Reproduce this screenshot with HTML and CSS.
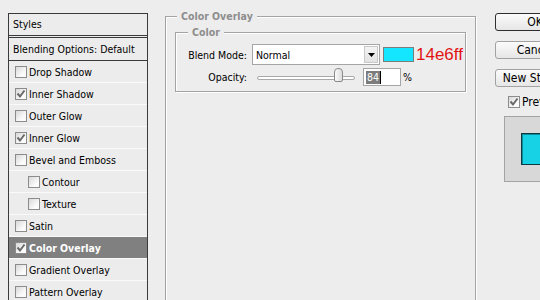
FILE: index.html
```html
<!DOCTYPE html>
<html>
<head>
<meta charset="utf-8">
<title>Layer Style</title>
<link rel="stylesheet" href="styles.css">
</head>
<body>
<div class="styles">
  <div class="hdr">Styles</div>
  <div class="blend">Blending Options: Default</div>
  <div class="row"><span class="cb"></span>Drop Shadow</div>
  <div class="row"><span class="cb"><svg viewBox="0 0 10 10"><path d="M1.5 4.5 L4 7.5 L8.5 1.5"/></svg></span>Inner Shadow</div>
  <div class="row"><span class="cb"></span>Outer Glow</div>
  <div class="row"><span class="cb"><svg viewBox="0 0 10 10"><path d="M1.5 4.5 L4 7.5 L8.5 1.5"/></svg></span>Inner Glow</div>
  <div class="row"><span class="cb"></span>Bevel and Emboss</div>
  <div class="row sub"><span class="cb"></span>Contour</div>
  <div class="row sub"><span class="cb"></span>Texture</div>
  <div class="row"><span class="cb"></span>Satin</div>
  <div class="row active"><span class="cb"><svg viewBox="0 0 10 10"><path d="M1.5 4.5 L4 7.5 L8.5 1.5"/></svg></span>Color Overlay</div>
  <div class="row"><span class="cb"></span>Gradient Overlay</div>
  <div class="row"><span class="cb"></span>Pattern Overlay</div>
</div>

<div class="main">
  <fieldset class="grp outer">
    <legend>Color Overlay</legend>
    <fieldset class="grp inner">
      <legend>Color</legend>
      <div class="frow first">
        <span class="lbl">Blend Mode:</span>
        <div class="select">
          <span class="val">Normal</span>
          <span class="dd"><svg viewBox="0 0 7 4"><path d="M0 0 H7 L3.5 4 Z"/></svg></span>
        </div>
        <span class="swatch"></span>
        <span class="hex">14e6ff</span>
      </div>
      <div class="frow second">
        <span class="lbl">Opacity:</span>
        <div class="slider"><span class="track"></span><span class="thumb"></span></div>
        <div class="num"><span class="sel">84</span><span class="caret"></span></div>
        <span class="pct">%</span>
      </div>
    </fieldset>
  </fieldset>
</div>

<div class="side">
  <div class="btn def">OK</div>
  <div class="btn">Cancel</div>
  <div class="btn">New Style...</div>
  <div class="prev"><span class="cb"><svg viewBox="0 0 10 10"><path d="M1.5 4.5 L4 7.5 L8.5 1.5"/></svg></span>Preview</div>
  <div class="pbox"><div class="psq"></div></div>
</div>
</body>
</html>
```
FILE: styles.css
```css
html, body {
  margin: 0;
  padding: 0;
}
body {
  width: 540px;
  height: 300px;
  overflow: hidden;
  background: #ededed;
  color: #000;
  font-family: "DejaVu Sans Condensed", "DejaVu Sans", sans-serif;
  font-size: 10.5px;
  display: flex;
  align-items: flex-start;
}

/* ---------- styles list ---------- */
.styles {
  flex: none;
  width: 140px;
  height: 320px;
  margin: 13px 0 0 8px;
  box-sizing: border-box;
  border: 1px solid #3a3a3a;
  background: #ececec;
}
.hdr {
  height: 21px;
  line-height: 21px;
  padding-left: 4px;
  border-bottom: 3px double #3a3a3a;
}
.blend {
  height: 22px;
  line-height: 22px;
  padding-left: 4px;
  border-bottom: 1px solid #3a3a3a;
}
.row {
  height: 21px;
  display: flex;
  align-items: center;
  gap: 2px;
  padding-left: 6px;
  border-bottom: 1px solid #fafafa;
}
.row.sub {
  padding-left: 19px;
}
.row.active {
  background: #808080;
  color: #fff;
  font-weight: bold;
}
.cb {
  flex: none;
  width: 12px;
  height: 12px;
  box-sizing: border-box;
  border: 1px solid #8c8c8c;
  background: linear-gradient(135deg, #d8d8d8, #fbfbfb 70%);
  display: flex;
  align-items: center;
  justify-content: center;
}
.cb svg {
  width: 10px;
  height: 10px;
  fill: none;
  stroke: #6a6a6a;
  stroke-width: 2;
}

/* ---------- main area ---------- */
.main {
  flex: none;
  width: 311px;
  margin-left: 17px;
  margin-top: 10px;
}
.grp {
  margin: 0;
  padding: 0;
  border: 1px solid #a3a3a3;
  box-shadow: inset 1px 1px 0 #fff, 1px 1px 0 #fff;
  min-width: 0;
}
.grp > legend {
  font-weight: bold;
  color: #8e8e8e;
  background: #ededed;
  padding: 0 4px;
  line-height: 13px;
}
.outer {
  height: 320px;
  box-sizing: border-box;
  padding: 0 9px;
}
.outer > legend {
  margin-left: 2px;
}
.inner {
  margin-top: 3px;
  padding: 0 0 5px 0;
}
.inner > legend {
  margin-left: 12px;
}
.frow {
  display: flex;
  align-items: center;
}
.frow.first {
  margin-top: 5px;
  height: 21px;
}
.frow.second {
  margin-top: 3px;
  height: 18px;
}
.lbl {
  width: 71px;
  text-align: right;
  flex: none;
}
.select {
  margin-left: 5px;
  width: 128px;
  height: 21px;
  box-sizing: border-box;
  border: 1px solid #a5a5a5;
  background: #fff;
  display: flex;
  align-items: center;
  justify-content: space-between;
  padding: 0 1px 0 3px;
}
.dd {
  width: 14px;
  height: 17px;
  box-sizing: border-box;
  border: 1px solid #c9c9c9;
  background: linear-gradient(#f4f4f4, #e2e2e2);
  display: flex;
  align-items: center;
  justify-content: center;
}
.dd svg {
  width: 7px;
  height: 4px;
  fill: #000;
}
.swatch {
  margin-left: 3px;
  width: 31px;
  height: 15px;
  box-sizing: border-box;
  border: 1px solid #7d7d7d;
  background: #14e6ff;
}
.hex {
  margin-left: 2px;
  font-family: "Liberation Sans", Arial, sans-serif;
  font-size: 17px;
  color: #e31414;
  line-height: 17px;
}
.slider {
  position: relative;
  margin-left: 10px;
  width: 98px;
  height: 18px;
}
.track {
  display: block;
  margin-top: 8px;
  height: 4px;
  box-sizing: border-box;
  border: 1px solid #a8a8a8;
  border-radius: 2px;
  background: #fff;
}
.thumb {
  position: absolute;
  left: 77px;
  top: 0;
  width: 9px;
  height: 14px;
  box-sizing: border-box;
  border: 1px solid #8a8a8a;
  border-radius: 4px 4px 2px 2px;
  background: linear-gradient(90deg, #fafafa, #dcdcdc);
}
.num {
  margin-left: 8px;
  width: 38px;
  height: 18px;
  box-sizing: border-box;
  border: 1px solid #a5a5a5;
  background: #fff;
  display: flex;
  align-items: center;
  padding-left: 2px;
}
.sel {
  background: #7c7c7c;
  color: #fff;
  line-height: 13px;
  padding: 0 1px;
}
.caret {
  width: 1px;
  height: 13px;
  background: #000;
}
.pct {
  margin-left: 2px;
}

/* ---------- side buttons ---------- */
.side {
  flex: none;
  width: 80px;
  margin-left: 19px;
  margin-top: 13px;
  font-size: 12px;
  display: flex;
  flex-direction: column;
}
.btn {
  height: 18px;
  box-sizing: border-box;
  border: 1px solid #a2a2a2;
  border-radius: 3px;
  background: linear-gradient(#fbfbfb, #e6e6e6);
  display: flex;
  align-items: center;
  justify-content: center;
  margin-bottom: 10px;
}
.btn.def {
  border-color: #2e2e2e;
}
.prev {
  display: flex;
  align-items: center;
  gap: 2px;
  margin-left: 13px;
  height: 12px;
  margin-top: -1px;
}
.pbox {
  margin-top: 8px;
  margin-left: 9px;
  width: 70px;
  height: 66px;
  box-sizing: border-box;
  border: 1px solid #a3a3a3;
  background: #d8d8d8;
  padding: 16px 0 0 16px;
}
.psq {
  width: 34px;
  height: 32px;
  box-sizing: border-box;
  border: 1px solid #0d3a42;
  background: #17d2e4;
  box-shadow: inset 1px 1px 0 #0b8a98;
}
```
